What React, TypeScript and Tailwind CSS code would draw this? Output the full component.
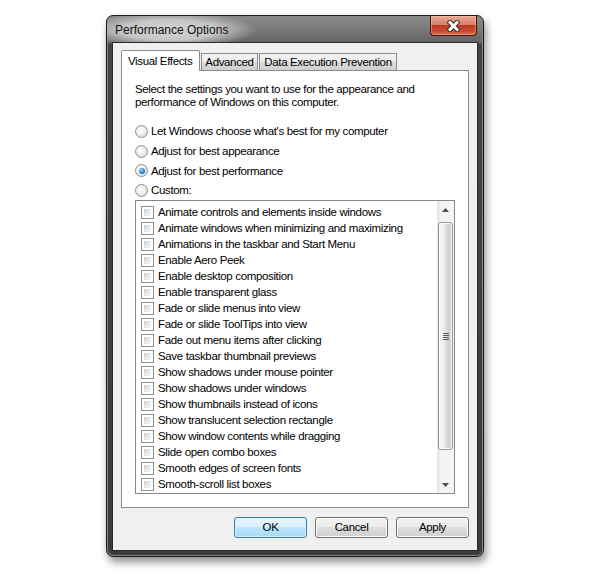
import React from 'react';

const effects = [
  'Animate controls and elements inside windows',
  'Animate windows when minimizing and maximizing',
  'Animations in the taskbar and Start Menu',
  'Enable Aero Peek',
  'Enable desktop composition',
  'Enable transparent glass',
  'Fade or slide menus into view',
  'Fade or slide ToolTips into view',
  'Fade out menu items after clicking',
  'Save taskbar thumbnail previews',
  'Show shadows under mouse pointer',
  'Show shadows under windows',
  'Show thumbnails instead of icons',
  'Show translucent selection rectangle',
  'Show window contents while dragging',
  'Slide open combo boxes',
  'Smooth edges of screen fonts',
  'Smooth-scroll list boxes',
];

const choices = [
  { label: "Let Windows choose what's best for my computer", h: 'h-[20px]' },
  { label: 'Adjust for best appearance', h: 'h-[20px]' },
  { label: 'Adjust for best performance', h: 'h-[19px]', checked: true },
  { label: 'Custom:', h: 'h-[20px]' },
];

function Radio({ checked }: { checked?: boolean }) {
  return (
    <div className="w-[13px] h-[13px] shrink-0 rounded-full border border-[#8f9090] bg-[radial-gradient(circle_at_40%_40%,#ffffff_0%,#f0f0f0_40%,#cfd1d3_100%)] flex items-center justify-center">
      {checked && (
        <div className="w-[6px] h-[6px] rounded-full bg-[radial-gradient(circle_at_40%_35%,#a6dcff_0%,#3a8fd6_45%,#0f3f78_100%)]" />
      )}
    </div>
  );
}

function Check() {
  return (
    <div className="w-[13px] h-[13px] shrink-0 border border-[#8e8f8f] bg-white p-[2px]">
      <div className="w-full h-full bg-[linear-gradient(135deg,#cdd0d4_0%,#e4e5e6_50%,#f7f7f7_100%)]" />
    </div>
  );
}

function Button({ label, focused }: { label: string; focused?: boolean }) {
  return (
    <div
      className={
        focused
          ? 'w-[73px] h-[21px] rounded-[3px] border border-[#3c7fb1] bg-[linear-gradient(#eaf6fd_0%,#d9f0fc_50%,#bee6fd_50%,#a7d9f5_100%)] shadow-[inset_0_0_0_1px_#d3efff] flex items-center justify-center'
          : 'w-[73px] h-[21px] rounded-[3px] border border-[#707070] bg-[linear-gradient(#f2f2f2_0%,#ebebeb_50%,#dddddd_50%,#cfcfcf_100%)] shadow-[inset_0_0_0_1px_#fbfbfb] flex items-center justify-center'
      }
    >
      {label}
    </div>
  );
}

export default function App() {
  return (
    <div className="w-[600px] h-[576px] bg-white pt-[15px] pl-[106px] font-['Liberation_Sans',Arial,sans-serif] text-[11.5px] tracking-[-0.35px] text-black">
      <div className="w-[378px] h-[542px] rounded-[7px] border border-[#1a1a1a] bg-[linear-gradient(180deg,#8c8c8c_0px,#646464_27px,#444444_28px,#3c3c3c_100%)] shadow-[inset_0_0_0_1px_#858585,2px_5px_8px_rgba(0,0,0,0.45)] flex flex-col">
        {/* title bar */}
        <div className="h-[27px] flex rounded-t-[6px] bg-[radial-gradient(ellipse_88px_18px_at_62px_14px,#d4d4d4_0%,#c6c6c6_55%,rgba(150,150,150,0)_100%)]">
          <div className="pl-[8px] pt-[7px] leading-[14px] text-[12px] tracking-normal text-[#111]">Performance Options</div>
          <div className="ml-auto mr-[6px] w-[47px] h-[20px] rounded-b-[4px] border border-t-0 border-[#3d1008] bg-[linear-gradient(#eaa898_0%,#d6806b_45%,#bd3a22_50%,#c84c32_80%,#d86e52_100%)] shadow-[inset_0_0_0_1px_rgba(255,200,180,0.45)] flex items-center justify-center">
            <svg width="15" height="12" viewBox="0 0 15 12">
              <g strokeLinecap="square">
                <line x1="4" y1="2.5" x2="11" y2="9.5" stroke="#3a3a3a" strokeWidth="5" />
                <line x1="11" y1="2.5" x2="4" y2="9.5" stroke="#3a3a3a" strokeWidth="5" />
                <line x1="4" y1="2.5" x2="11" y2="9.5" stroke="#ffffff" strokeWidth="2.8" />
                <line x1="11" y1="2.5" x2="4" y2="9.5" stroke="#ffffff" strokeWidth="2.8" />
              </g>
            </svg>
          </div>
        </div>

        {/* client area */}
        <div className="mx-[6px] mb-[6px] flex-1 bg-[#f0f0f0] px-[8px] pt-[7px] shadow-[0_0_0_1px_#2a2a2a]">
          {/* tabs */}
          <div className="flex items-end h-[20px] whitespace-nowrap">
            <div className="relative z-10 w-[79px] h-[21px] -mb-[1px] bg-white border border-b-0 border-[#898c95] rounded-t-[2px] pl-[6px] pt-[3px] leading-[14px]">
              Visual Effects
            </div>
            <div className="ml-[1px] w-[57px] h-[17px] border border-b-0 border-[#898c95] bg-[linear-gradient(#f3f3f3_0%,#ebebeb_50%,#dddddd_50%,#cfcfcf_100%)] flex items-center justify-center leading-[14px]">
              Advanced
            </div>
            <div className="ml-[1px] w-[138px] h-[17px] border border-b-0 border-[#898c95] bg-[linear-gradient(#f3f3f3_0%,#ebebeb_50%,#dddddd_50%,#cfcfcf_100%)] flex items-center justify-center leading-[14px]">
              Data Execution Prevention
            </div>
          </div>

          {/* panel */}
          <div className="h-[438px] border border-[#898c95] bg-white pl-[13px] pt-[12px]">
            <p className="leading-[13px]">
              Select the settings you want to use for the appearance and
              <br />
              performance of Windows on this computer.
            </p>
            <div className="mt-[12px]">
              {choices.map((c) => (
                <div key={c.label} className={`${c.h} flex items-center gap-[3px]`}>
                  <Radio checked={c.checked} />
                  <span className="pt-[2px]">{c.label}</span>
                </div>
              ))}
            </div>

            <div className="w-[320px] h-[294px] border border-[#828790] bg-white flex">
              <div className="flex-1 pt-[3px]">
                {effects.map((e) => (
                  <div key={e} className="h-[16px] flex items-center pl-[5px] gap-[4px] whitespace-nowrap">
                    <Check />
                    <span className="pt-[2px]">{e}</span>
                  </div>
                ))}
              </div>
              {/* scrollbar */}
              <div className="w-[17px] flex flex-col items-center bg-[linear-gradient(90deg,#e3e3e3_0%,#f3f3f3_25%,#f5f5f5_100%)]">
                <div className="h-[17px] w-full flex items-center justify-center">
                  <svg width="7" height="4" viewBox="0 0 7 4">
                    <path d="M0 4 L3.5 0 L7 4 Z" fill="#4d4d4d" />
                  </svg>
                </div>
                <div className="mt-[4px] w-[15px] h-[228px] rounded-[3px] border border-[#989898] bg-[linear-gradient(90deg,#f6f6f6_0%,#ececec_45%,#dadada_55%,#cecece_100%)] shadow-[inset_0_0_0_1px_#fafafa] flex flex-col items-center justify-center gap-[1px]">
                  <div className="w-[6px] h-[1px] bg-[#5b5b5b]" />
                  <div className="w-[6px] h-[1px] bg-[#5b5b5b]" />
                  <div className="w-[6px] h-[1px] bg-[#5b5b5b]" />
                  <div className="w-[6px] h-[1px] bg-[#5b5b5b]" />
                </div>
                <div className="flex-1" />
                <div className="h-[17px] w-full flex items-center justify-center">
                  <svg width="7" height="4" viewBox="0 0 7 4">
                    <path d="M0 0 L7 0 L3.5 4 Z" fill="#4d4d4d" />
                  </svg>
                </div>
              </div>
            </div>
          </div>

          {/* buttons */}
          <div className="mt-[9px] flex justify-end gap-[8px]">
            <Button label="OK" focused />
            <Button label="Cancel" />
            <Button label="Apply" />
          </div>
        </div>
      </div>
    </div>
  );
}
